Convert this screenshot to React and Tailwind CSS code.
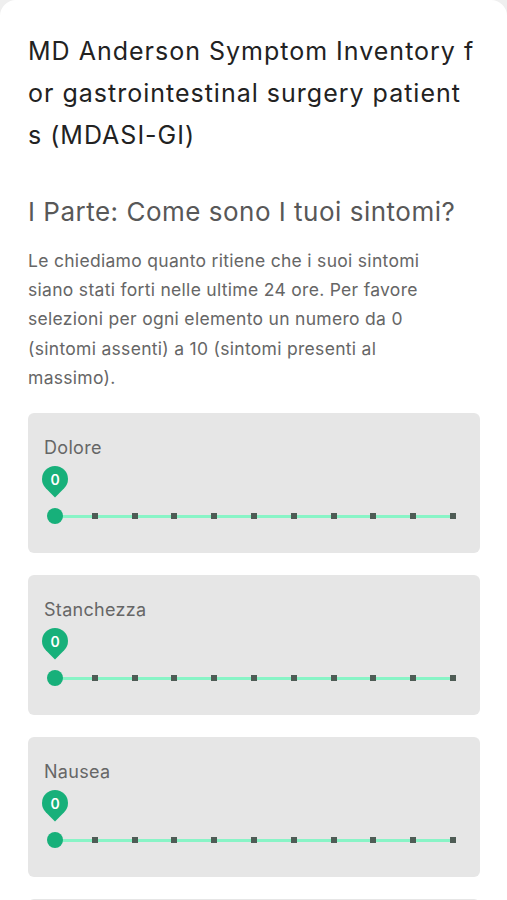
import React from 'react';

const symptoms = ['Dolore', 'Stanchezza', 'Nausea', 'Disturbi del sonno'];

const SliderCard = ({ label, value = 0 }) => {
  const ticks = Array.from({ length: 11 }, (_, i) => i);

  return (
    <div className="bg-[#e6e6e6] rounded-md px-4 pt-[23px] pb-[29px]">
      <div className="text-[18px] leading-6 tracking-[0.3px] text-[#666]">{label}</div>
      <div className="mt-[48px] mx-[11px] relative h-4">
        <div className="absolute left-0 right-0 top-[7px] h-[3px] bg-[#88f4c6]" />
        {ticks.slice(1).map((i) => (
          <div
            key={i}
            className="absolute top-[5px] w-[6px] h-[6px] bg-[#4e5c55] -translate-x-1/2"
            style={{ left: `${i * 10}%` }}
          />
        ))}
        <div
          className="absolute top-0 w-4 h-4 rounded-full bg-[#17b07a] -translate-x-1/2"
          style={{ left: `${value * 10}%` }}
        />
        {/* value pin */}
        <div
          className="absolute top-[-42px] w-[26px] h-[26px] -translate-x-1/2"
          style={{ left: `${value * 10}%` }}
        >
          <div className="absolute inset-0 bg-[#17b07a] rotate-45 rounded-[50%_50%_0_50%]" />
          <span className="absolute inset-0 flex items-center justify-center text-white text-[14px] font-semibold">
            {value}
          </span>
        </div>
      </div>
    </div>
  );
};

export default function App() {
  return (
    <div className="bg-[#efefef] min-h-screen" style={{ fontFamily: 'Inter, "Noto Sans", sans-serif' }}>
      <div className="bg-white rounded-t-2xl px-7 pt-[30px] pb-8">
        <h1 className="text-[25px] leading-[42px] tracking-[1px] text-[#222] whitespace-nowrap">
          MD Anderson Symptom Inventory f<br />or gastrointestinal surgery patient<br />s (MDASI-GI)
        </h1>
        <h2 className="mt-[38px] text-[26px] leading-9 tracking-[0.5px] font-normal text-[#585858]">
          I Parte: Come sono I tuoi sintomi?
        </h2>
        <p className="mt-[16px] mr-4 text-[17.5px] leading-[29.2px] tracking-[0.3px] text-[#666]">
          Le chiediamo quanto ritiene che i suoi sintomi siano stati forti nelle ultime 24 ore. Per favore selezioni per ogni elemento un numero da 0 (sintomi assenti) a 10 (sintomi presenti al massimo).
        </p>
        <div className="mt-[21px] mr-[-1px] flex flex-col gap-[22px]">
          {symptoms.map((s) => (
            <SliderCard key={s} label={s} />
          ))}
        </div>
      </div>
    </div>
  );
}
